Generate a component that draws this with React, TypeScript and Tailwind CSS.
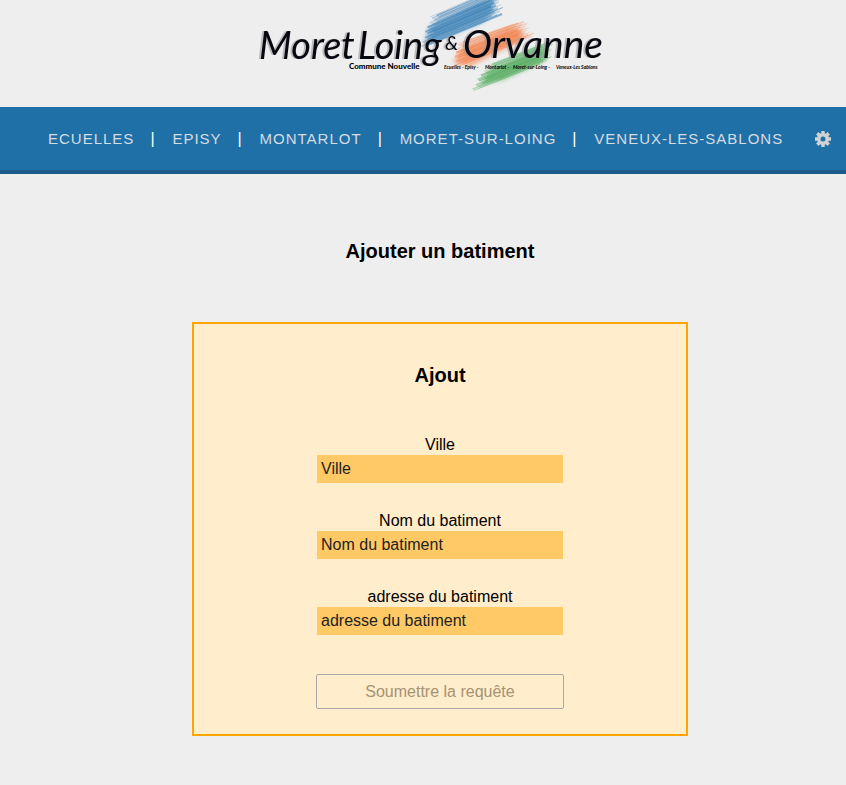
import React from "react";

const towns = ["ECUELLES", "EPISY", "MONTARLOT", "MORET-SUR-LOING", "VENEUX-LES-SABLONS"];

const fields = [
  { id: "ville", label: "Ville" },
  { id: "nom", label: "Nom du batiment" },
  { id: "adresse", label: "adresse du batiment" },
];

type Point = [number, number];

// Bristles run from the left edge (from -> to) to the right edge (from -> to).
type Paint = { color: string; left: [Point, Point]; right: [Point, Point]; count: number; body: string };

const paints: Paint[] = [
  {
    color: "#2272b0",
    left: [[178, 15], [168, 46]],
    right: [[240, -12], [240, 16]],
    count: 24,
    body: "M172 27L222 2L238 -2L236 13L226 22L176 42L168 42Z",
  },
  {
    color: "#f4763c",
    left: [[204, 42], [202, 66]],
    right: [[262, 22], [272, 38]],
    count: 22,
    body: "M202 51L252 28L266 30L262 42L214 66L196 63Z",
  },
  {
    color: "#46a551",
    left: [[234, 64], [218, 90]],
    right: [[290, 42], [288, 62]],
    count: 22,
    body: "M232 72L280 48L292 48L286 62L246 80L224 84Z",
  },
];

function Brush({ color, left, right, count, body }: Paint) {
  return (
    <g stroke={color}>
      <path d={body} fill={color} stroke="none" opacity="0.55" className="blur-[2px]" />
      {Array.from({ length: count }, (_, i) => {
        const t = i / (count - 1);
        const a = ((i * 7) % 11) - 5;
        const b = ((i * 5) % 13) - 6;
        return (
          <line
            key={i}
            x1={left[0][0] + (left[1][0] - left[0][0]) * t + a}
            y1={left[0][1] + (left[1][1] - left[0][1]) * t - a * 0.4}
            x2={right[0][0] + (right[1][0] - right[0][0]) * t + b}
            y2={right[0][1] + (right[1][1] - right[0][1]) * t - b * 0.4}
            strokeWidth={1 + (i % 3) * 0.5}
            opacity={0.2 + ((i * 3) % 5) * 0.08}
          />
        );
      })}
    </g>
  );
}

function Logo() {
  return (
    <svg width="348" height="96" viewBox="0 0 348 96" role="img" aria-label="Moret Loing & Orvanne">
      {paints.map((p) => (
        <Brush key={p.color} {...p} />
      ))}
      <g
        className="font-[Lato,sans-serif] text-[38px] italic drop-shadow-[-2px_0px_0px_#99999999]"
        fill="#080810"
      >
        <text x="2" y="59">Moret</text>
        <text x="101" y="59">Loing</text>
        <text x="188" y="50" className="text-[20px]">&amp;</text>
        <text x="206" y="58" className="text-[39px]">Orvanne</text>
      </g>
      <text x="92" y="69" className="font-[Lato,sans-serif] text-[8px] font-black">
        Commune Nouvelle
      </text>
      <g className="font-[Lato,sans-serif] text-[5px] font-bold italic">
        <text x="187" y="69">Ecuelles - Episy -</text>
        <text x="228" y="69">Montarlot -</text>
        <text x="256" y="69">Moret-sur-Loing -</text>
        <text x="299" y="69">Veneux-Les Sablons</text>
      </g>
    </svg>
  );
}

function Gear() {
  return (
    <svg width="16" height="16" viewBox="0 0 16 16" fill="none" stroke="#d0d2d4" aria-hidden="true">
      <circle cx="8" cy="8" r="4.3" strokeWidth="3.6" />
      <g strokeWidth="3.4">
        <path d="M8 0v3M8 13v3M0 8h3M13 8h3M2.3 2.3l2.2 2.2M11.5 11.5l2.2 2.2M2.3 13.7l2.2-2.2M11.5 4.5l2.2-2.2" />
      </g>
    </svg>
  );
}

export default function App() {
  return (
    <div className="min-h-screen bg-[#eeeeee] font-['Liberation_Sans',Arial,sans-serif] text-base text-black">
      <header>
        <div className="flex h-[107px] items-start justify-center pl-4">
          <Logo />
        </div>
        <nav className="flex items-center border-b-4 border-[#1b5a89] bg-[#2070a8] py-5 pr-[15px] pl-12">
          <ul className="flex items-center gap-4 text-[15px] leading-[23px] tracking-[1px] whitespace-nowrap text-[#d5dce2]">
            {towns.map((town, i) => (
              <React.Fragment key={town}>
                {i > 0 && (
                  <li aria-hidden="true" className="w-[6px] text-base leading-[23px] text-white">|</li>
                )}
                <li>
                  <a href="#">{town}</a>
                </li>
              </React.Fragment>
            ))}
          </ul>
          <button type="button" aria-label="Paramètres" className="ml-auto">
            <Gear />
          </button>
        </nav>
      </header>
      <main className="flex flex-col items-center pt-[65px] pb-12 pl-[34px]">
        <h1 className="text-xl leading-6 font-bold">Ajouter un batiment</h1>
        <form className="mt-[59px] flex w-full max-w-[496px] flex-col items-center border-2 border-[#ffa500] bg-[#ffedcc] pt-[39px] pb-[25px]">
          <h2 className="text-xl leading-6 font-bold">Ajout</h2>
          <div className="mt-12 flex w-[248px] flex-col gap-7">
            {fields.map((f) => (
              <div key={f.id} className="flex flex-col px-px text-center">
                <label htmlFor={f.id} className="leading-5">{f.label}</label>
                <input
                  id={f.id}
                  type="text"
                  placeholder={f.label}
                  className="h-7 w-full bg-[#ffc966] px-1 placeholder:text-[#222222]"
                />
              </div>
            ))}
          </div>
          <button
            type="submit"
            disabled
            className="mt-[39px] h-[35px] w-[248px] rounded-xs border border-[#a9a9a9] text-[#a69372]"
          >
            Soumettre la requête
          </button>
        </form>
      </main>
    </div>
  );
}
